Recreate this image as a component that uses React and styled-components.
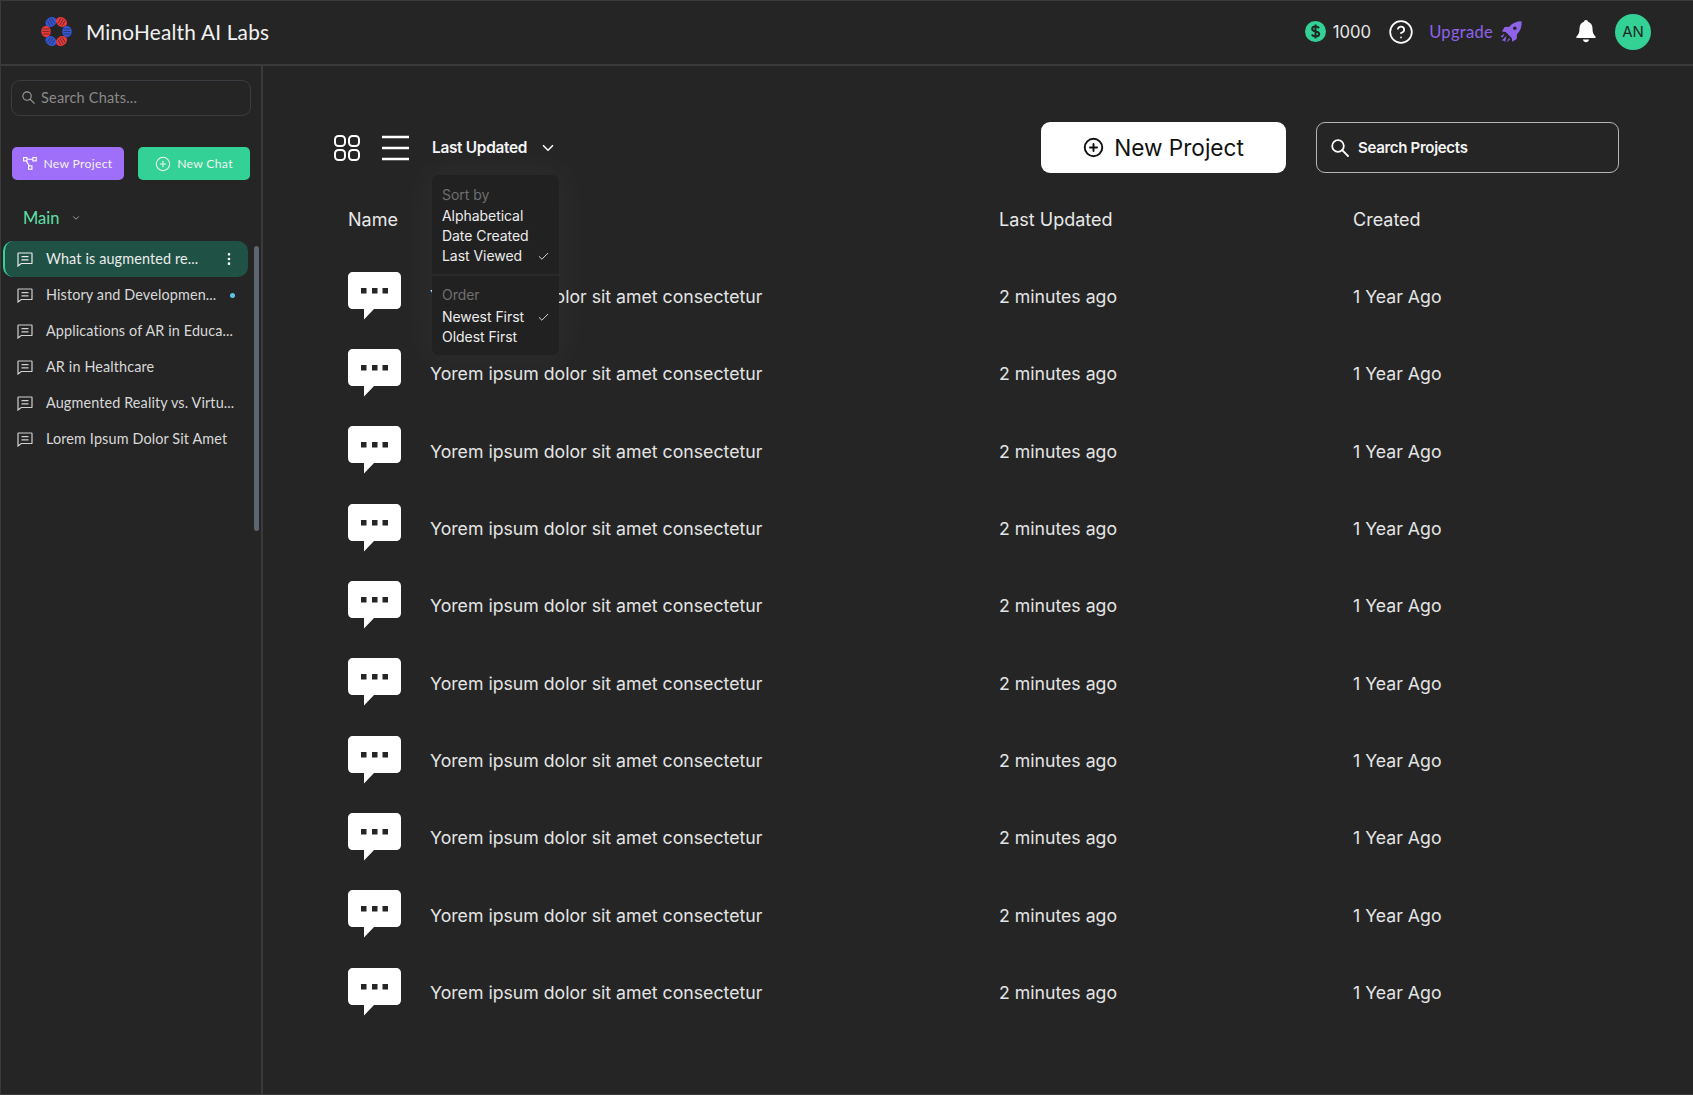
import React from 'react'
import styled, { createGlobalStyle } from 'styled-components'
import { ChevronDown, Check, CirclePlus, CircleHelp, MoreVertical } from 'lucide-react'

const GlobalStyle = createGlobalStyle`
  html, body { margin: 0; padding: 0; background: #252525; }
  * { box-sizing: border-box; }
`

const Page = styled.div`
  width: 1693px;
  height: 1095px;
  display: flex;
  flex-direction: column;
  background: #252525;
  border: 1px solid #3a3a3a;
  border-right: 0;
  color: #fff;
  font-family: Inter, "Liberation Sans", sans-serif;
  overflow: hidden;
`
const Header = styled.header`
  height: 65px;
  flex: none;
  display: flex;
  align-items: center;
  padding: 0 42px 2px 40px;
  border-bottom: 2px solid #3a3a3a;
`
const Brand = styled.div`
  display: flex;
  align-items: center;
  gap: 14px;
  font: 400 20.8px Lato, sans-serif;
  letter-spacing: 0.2px;
  color: #f2f2f2;
`
const HeaderRight = styled.div`
  margin-left: auto;
  display: flex;
  align-items: center;
`
const Coins = styled.div`
  display: flex;
  align-items: center;
  gap: 7px;
  font: 400 16.7px Inter, sans-serif;
  color: #e8e8e8;
  margin-right: 17px;
`
const Upgrade = styled.div`
  display: flex;
  align-items: center;
  gap: 7px;
  margin-left: 15px;
  font: 400 16.5px Lato, sans-serif;
  letter-spacing: 0.3px;
  color: #8e63ea;
`
const BellWrap = styled.div`
  display: flex;
  margin-left: 54px;
  margin-right: 19px;
`
const Avatar = styled.div`
  width: 36px;
  height: 36px;
  border-radius: 50%;
  background: #34d196;
  color: #1e2a26;
  display: flex;
  align-items: center;
  justify-content: center;
  font: 400 15px Inter, sans-serif;
`
const Body = styled.div`
  flex: 1;
  display: flex;
  min-height: 0;
`
const Sidebar = styled.aside`
  position: relative;
  width: 262px;
  flex: none;
  border-right: 2px solid #3a3a3a;
  padding: 14px 0 0;
  font-family: Lato, sans-serif;
`
const ChatSearch = styled.div`
  margin: 0 10px;
  height: 36px;
  width: 240px;
  display: flex;
  align-items: center;
  gap: 6px;
  padding: 0 10px 2px;
  border: 1px solid #393c40;
  border-radius: 9px;
  color: #8a8a8a;
  font-size: 14.5px;
  letter-spacing: 0.2px;
`
const SideButtons = styled.div`
  display: flex;
  gap: 14px;
  margin: 31px 11px 0;
`
const SideButton = styled.div`
  width: 112px;
  height: 33px;
  border-radius: 5px;
  display: flex;
  align-items: center;
  justify-content: center;
  gap: 6px;
  font-size: 12.2px;
  letter-spacing: 0.3px;
  color: #f2f2f2;
  background: ${p => p.$bg};
`
const SectionLabel = styled.div`
  margin: 27px 0 0 22px;
  height: 22px;
  display: flex;
  align-items: center;
  gap: 12px;
  font-size: 16.5px;
  color: #5ee0a6;
`
const ChatList = styled.div`
  margin: 12px 0 0 2px;
  width: 245px;
  display: flex;
  flex-direction: column;
`
const ChatItem = styled.div`
  height: 36px;
  display: flex;
  align-items: center;
  gap: 13px;
  padding-left: ${p => (p.$active ? '12px' : '14px')};
  padding-right: 11px;
  font-size: 14.4px;
  letter-spacing: 0.13px;
  color: ${p => (p.$active ? '#ececec' : '#d8d8d8')};
  border-radius: 10px;
  background: ${p => (p.$active ? '#1f5245' : 'transparent')};
  border-left: ${p => (p.$active ? '2px solid #34d196' : '0')};
`
const ChatTitle = styled.span`
  white-space: nowrap;
  flex: 1;
  padding-bottom: 2px;
`
const UnreadDot = styled.span`
  width: 5px;
  height: 5px;
  border-radius: 50%;
  background: #5cc6ea;
  margin-right: 2px;
`
const Scrollbar = styled.div`
  position: absolute;
  top: 180px;
  left: 253px;
  width: 5px;
  height: 285px;
  border-radius: 3px;
  background: #5d6670;
`
const Main = styled.main`
  flex: 1;
  position: relative;
  padding: 56px 0 0 71px;
`
const Toolbar = styled.div`
  display: flex;
  align-items: center;
  height: 51px;
`
const IconSlot = styled.div`
  display: flex;
  margin-right: 22px;
`
const SortToggle = styled.div`
  display: flex;
  align-items: center;
  gap: 12px;
  margin-left: 1px;
  font: 600 15.4px Inter, sans-serif;
  letter-spacing: -0.3px;
  color: #f5f5f5;
`
const NewProject = styled.div`
  margin-left: auto;
  width: 245px;
  height: 51px;
  border-radius: 9px;
  background: #fff;
  color: #111;
  display: flex;
  align-items: center;
  justify-content: center;
  gap: 10px;
  font: 400 22.6px Inter, sans-serif;
`
const ProjectSearch = styled.div`
  margin: 0 74px 0 30px;
  width: 303px;
  height: 51px;
  border: 1px solid #b5b5b5;
  border-radius: 9px;
  display: flex;
  align-items: center;
  gap: 9px;
  padding: 0 14px;
  font: 600 15px Inter, sans-serif;
  letter-spacing: -0.3px;
  color: #f5f5f5;
`
const Dropdown = styled.div`
  position: absolute;
  top: 109px;
  left: 169px;
  width: 127px;
  height: 180px;
  border-radius: 7px;
  background: #212121;
  box-shadow: 0 0 34px 8px rgba(255, 255, 255, 0.035);
  font: 400 14px/20px Inter, sans-serif;
  letter-spacing: -0.05px;
  color: #ededed;
  z-index: 2;
`
const DropGroup = styled.div`
  padding: ${p => (p.$first ? '10px 9px 8px 10px' : '9px 9px 0 10px')};
  border-top: ${p => (p.$first ? '0' : '2px solid #2a2a2a')};
`
const DropLabel = styled.div`
  color: #6f6f6f;
  margin-bottom: ${p => p.$gap}px;
`
const DropItem = styled.div`
  height: 20px;
  display: flex;
  align-items: center;
  justify-content: space-between;
`
const Grid = styled.div`
  display: grid;
  grid-template-columns: 82px 569px 354px 1fr;
  align-items: center;
  padding-left: 14px;
`
const TableHead = styled(Grid)`
  height: 32px;
  margin-top: 30px;
  margin-bottom: 22px;
  font-size: 18px;
  color: #e8e8e8;
`
const HeadName = styled.div`
  grid-column: 1 / span 2;
`
const Row = styled(Grid)`
  height: 77.33px;
  font-size: 17.7px;
  color: #e4e4e4;
`
const RowText = styled.div`
  padding-top: 2px;
`
const BubbleCell = styled.div`
  display: flex;
`

const Logo = () => {
  const lobes = [
    [10, 6, '#3557d6', 60], [20.5, 6, '#e8383a', 120], [26, 15.500, '#3557d6', 0],
    [20.5, 25, '#e8383a', 60], [10, 25, '#3557d6', 120], [5, 15.500, '#e8383a', 0]
  ]
  return (
    <svg width="31" height="31" viewBox="0 0 31 31">
      {lobes.map(([x, y, c, r], i) => (
        <g key={i} transform={`translate(${x} ${y}) rotate(${r})`}>
          <ellipse rx="4.700" ry="5.800" fill={c} />
          <path d="M-3-2.500L3-2.500M-3.500 0L3.500 0M-3 2.500L3 2.500" stroke="#252525" strokeWidth=".8" opacity=".7" />
        </g>
      ))}
    </svg>
  )
}

const SearchGlyph = ({ size, color, width }) => (
  <svg width={size} height={size} viewBox="0 0 18 18" fill="none" stroke={color} strokeWidth={width}>
    <circle cx="7" cy="7" r="5.800" />
    <path d="M11.200 11.200L17 17" strokeLinecap="round" />
  </svg>
)

const CoinIcon = () => (
  <svg width="21" height="21" viewBox="0 0 21 21">
    <circle cx="10.5" cy="10.5" r="10.5" fill="#34d196" />
    <path d="M14 7.2C13.4 6 12 5.6 10.5 5.6 8.6 5.6 7.2 6.500 7.200 8c0 3.400 7 1.600 7 5 0 1.500-1.500 2.400-3.700 2.400-1.700 0-3.100-.6-3.700-1.900M10.500 3.500v14" fill="none" stroke="#1e2a26" strokeWidth="2" />
  </svg>
)

const RocketIcon = () => (
  <svg width="22" height="22" viewBox="0 0 22 22" fill="#8e63ea">
    <path d="M21.700.3c.3 5.200-1.200 9.800-4.700 13l-.3 4.700-4.500 2.800-.5-3.800-6-6-3.800-.4 2.800-4.600 4.700-.3C12 2.200 16.500.3 21.700.3z" />
    <circle cx="14.800" cy="7.200" r="1.800" fill="#252525" />
    <path d="M4.500 12.500L.5 15.500l2.200 1zM6.500 14.800L1.800 19.500l2.700.2.5 1.800zM9 17l-2.500 4.500 3.500-3z" />
  </svg>
)

const BellIcon = () => (
  <svg width="20" height="23" viewBox="0 0 20 23" fill="#fff">
    <path d="M10 0c1.100 0 1.900.8 2 1.800 3 .9 4.500 3.500 4.500 6.700 0 4 .9 6 3 8 .6.700.2 1.500-.6 1.500H1.100c-.8 0-1.200-.8-.6-1.500 2.100-2 3-4 3-8C3.500 5.300 5 2.700 8 1.800 8.100.8 8.900 0 10 0z" />
    <path d="M7 19.500h6c-.3 1.700-1.500 2.700-3 2.700s-2.700-1-3-2.700z" />
  </svg>
)

const NodesIcon = () => (
  <svg width="14" height="13" viewBox="0 0 15 14" fill="none" stroke="#fff" strokeWidth="1.200">
    <rect x=".6" y=".6" width="3.600" height="3.600" />
    <rect x="10.600" y=".6" width="3.600" height="3.600" />
    <rect x="6" y="9.600" width="3.600" height="3.600" />
    <path d="M4.200 2.400h6.400M3.300 4.200l3.600 5.400" />
  </svg>
)

const ChatGlyph = ({ light }) => (
  <svg width="16" height="15" viewBox="0 0 16 15" fill="none" stroke={light ? '#ececec' : '#d0d0d0'} strokeWidth="1.200">
    <path d="M1.600 1h12.800c.3 0 .6.300.6.600v9.300c0 .3-.3.600-.6.600H4.200L1 14V1.600C1 1.300 1.300 1 1.600 1z" />
    <path d="M4.500 4.700h7M4.500 7.800h7" />
  </svg>
)

const GridIcon = () => (
  <svg width="26" height="26" viewBox="0 0 26 26" fill="none" stroke="#fff" strokeWidth="2">
    <rect x="1" y="1" width="10" height="10" rx="3.500" />
    <rect x="15" y="1" width="10" height="10" rx="3.500" />
    <rect x="1" y="15" width="10" height="10" rx="3.500" />
    <rect x="15" y="15" width="10" height="10" rx="3.500" />
  </svg>
)

const ListIcon = () => (
  <svg width="27" height="26" viewBox="0 0 27 26" fill="none" stroke="#fff" strokeWidth="2.600">
    <path d="M0 2h27M0 13h27M0 24h27" />
  </svg>
)

const Bubble = () => (
  <svg width="53" height="48" viewBox="0 0 53 48">
    <path d="M5 0h43c3 0 5 2 5 5v27c0 3-2 5-5 5H26L16 47.500V37H5c-3 0-5-2-5-5V5c0-3 2-5 5-5z" fill="#fff" />
    <rect x="13" y="16" width="5.500" height="5.500" fill="#252525" />
    <rect x="24" y="16" width="5.500" height="5.500" fill="#252525" />
    <rect x="34.500" y="16" width="5.500" height="5.500" fill="#252525" />
  </svg>
)

const chats = [
  'What is augmented re...',
  'History and Developmen...',
  'Applications of AR in Educa...',
  'AR in Healthcare',
  'Augmented Reality vs. Virtu...',
  'Lorem Ipsum Dolor Sit Amet'
]

const rows = Array.from({ length: 10 }, (_, i) => i)

export default function App() {
  return (
    <Page>
      <GlobalStyle />
      <Header>
        <Brand><Logo />MinoHealth AI Labs</Brand>
        <HeaderRight>
          <Coins><CoinIcon />1000</Coins>
          <CircleHelp size={26} strokeWidth={1.6} color="#fff" />
          <Upgrade>Upgrade <RocketIcon /></Upgrade>
          <BellWrap><BellIcon /></BellWrap>
          <Avatar>AN</Avatar>
        </HeaderRight>
      </Header>
      <Body>
        <Sidebar>
          <ChatSearch><SearchGlyph size={13} color="#a0a0a0" width={1.5} />Search Chats...</ChatSearch>
          <SideButtons>
            <SideButton $bg="#a06ffa"><NodesIcon />New Project</SideButton>
            <SideButton $bg="#34d196"><CirclePlus size={16} strokeWidth={1.6} />New Chat</SideButton>
          </SideButtons>
          <SectionLabel>Main <ChevronDown size={10} color="#bbb" /></SectionLabel>
          <ChatList>
            {chats.map((c, i) => (
              <ChatItem key={c} $active={i === 0}>
                <ChatGlyph light={i === 0} />
                <ChatTitle>{c}</ChatTitle>
                {i === 0 && <MoreVertical size={16} color="#fff" />}
                {i === 1 && <UnreadDot />}
              </ChatItem>
            ))}
          </ChatList>
          <Scrollbar />
        </Sidebar>
        <Main>
          <Toolbar>
            <IconSlot><GridIcon /></IconSlot>
            <IconSlot><ListIcon /></IconSlot>
            <SortToggle>Last Updated <ChevronDown size={18} strokeWidth={2.2} /></SortToggle>
            <NewProject><CirclePlus size={21} strokeWidth={2.2} />New Project</NewProject>
            <ProjectSearch><SearchGlyph size={18} color="#fff" width={1.8} />Search Projects</ProjectSearch>
          </Toolbar>
          <Dropdown>
            <DropGroup $first>
              <DropLabel $gap={1}>Sort by</DropLabel>
              <DropItem>Alphabetical</DropItem>
              <DropItem>Date Created</DropItem>
              <DropItem>Last Viewed <Check size={13} strokeWidth={1.5} color="#fff" /></DropItem>
            </DropGroup>
            <DropGroup>
              <DropLabel $gap={2}>Order</DropLabel>
              <DropItem>Newest First <Check size={13} strokeWidth={1.5} color="#fff" /></DropItem>
              <DropItem>Oldest First</DropItem>
            </DropGroup>
          </Dropdown>
          <TableHead>
            <HeadName>Name</HeadName>
            <div>Last Updated</div>
            <div>Created</div>
          </TableHead>
          {rows.map(i => (
            <Row key={i}>
              <BubbleCell><Bubble /></BubbleCell>
              <RowText>Yorem ipsum dolor sit amet consectetur</RowText>
              <RowText>2 minutes ago</RowText>
              <RowText>1 Year Ago</RowText>
            </Row>
          ))}
        </Main>
      </Body>
    </Page>
  )
}
